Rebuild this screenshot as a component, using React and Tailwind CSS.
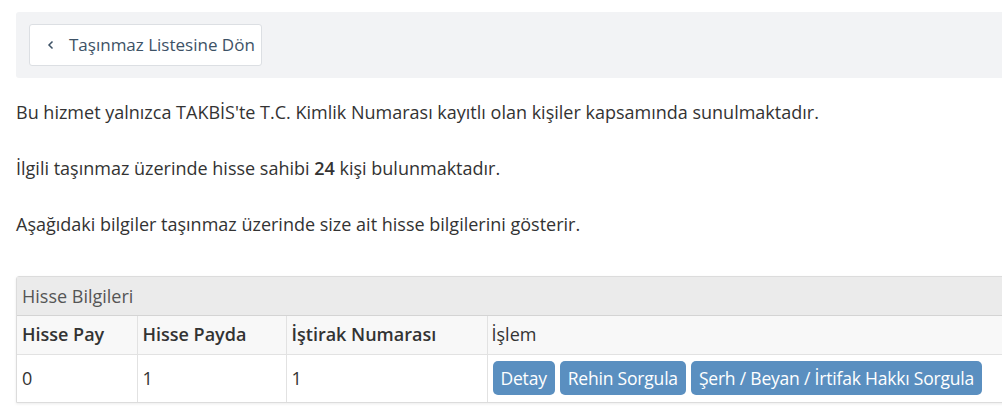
import React from 'react';

const rows = [{ pay: '0', payda: '1', istirak: '1' }];

const ActionButton = ({ children }) => (
  <button className="h-[34px] px-[8px] rounded-[5px] bg-[#5a8fc0] text-white text-[17.5px] tracking-[-0.2px] leading-none">
    {children}
  </button>
);

const App = () => {
  return (
    <div className="min-h-[415px] bg-white text-[#333] font-['Open_Sans',sans-serif] pt-[12px] overflow-hidden">
      {/* Back bar */}
      <div className="ml-[16px] bg-[#f2f3f5] h-[66px] flex items-center pl-[13px] rounded-l-[3px]">
        <button className="h-[42px] w-[233px] flex items-center gap-[13px] pl-[16px] bg-white border border-[#dcdfe3] rounded-[3px] text-[#3d5266] text-[17px]">
          <svg width="10" height="10" viewBox="0 0 10 10" fill="none" stroke="#3d5266" strokeWidth="1.5">
            <path d="M6.5 1.5 L3 5 L6.5 8.5" />
          </svg>
          <span>Taşınmaz Listesine Dön</span>
        </button>
      </div>

      {/* Info text */}
      <div className="pl-[16px] text-[18px] leading-[24px]">
        <p className="mt-[22px]">Bu hizmet yalnızca TAKBİS'te T.C. Kimlik Numarası kayıtlı olan kişiler kapsamında sunulmaktadır.</p>
        <p className="mt-[32px]">İlgili taşınmaz üzerinde hisse sahibi <strong className="font-semibold">24</strong> kişi bulunmaktadır.</p>
        <p className="mt-[32px]">Aşağıdaki bilgiler taşınmaz üzerinde size ait hisse bilgilerini gösterir.</p>
      </div>

      {/* Share table */}
      <div className="ml-[16px] mt-[40px] border border-[#dcdcdc] rounded-tl-[3px] shadow-[0_1px_3px_rgba(0,0,0,0.08)] w-[1000px]">
        <div className="h-[39px] bg-[#ebebeb] border-b border-[#d4d4d4] flex items-center pl-[5px] text-[18px] text-[#555]">
          Hisse Bilgileri
        </div>
        <table className="w-full border-collapse text-[18px]">
          <thead>
            <tr className="h-[38px] bg-[#f8f8f8] text-left">
              <th className="w-[120px] pl-[5px] font-semibold border-r border-b border-[#e2e2e2]">Hisse Pay</th>
              <th className="w-[149px] pl-[5px] font-semibold border-r border-b border-[#e2e2e2]">Hisse Payda</th>
              <th className="w-[201px] pl-[5px] font-semibold border-r border-b border-[#e2e2e2]">İştirak Numarası</th>
              <th className="pl-[4px] font-normal border-b border-[#e2e2e2]">İşlem</th>
            </tr>
          </thead>
          <tbody>
            {rows.map((r, i) => (
              <tr key={i} className="h-[48px]">
                <td className="pl-[5px] border-r border-[#e2e2e2]">{r.pay}</td>
                <td className="pl-[5px] border-r border-[#e2e2e2]">{r.payda}</td>
                <td className="pl-[5px] border-r border-[#e2e2e2]">{r.istirak}</td>
                <td className="pl-[5px]">
                  <div className="flex gap-[5px]">
                    <ActionButton>Detay</ActionButton>
                    <ActionButton>Rehin Sorgula</ActionButton>
                    <ActionButton>Şerh / Beyan / İrtifak Hakkı Sorgula</ActionButton>
                  </div>
                </td>
              </tr>
            ))}
          </tbody>
        </table>
      </div>
    </div>
  );
};

export default App;
